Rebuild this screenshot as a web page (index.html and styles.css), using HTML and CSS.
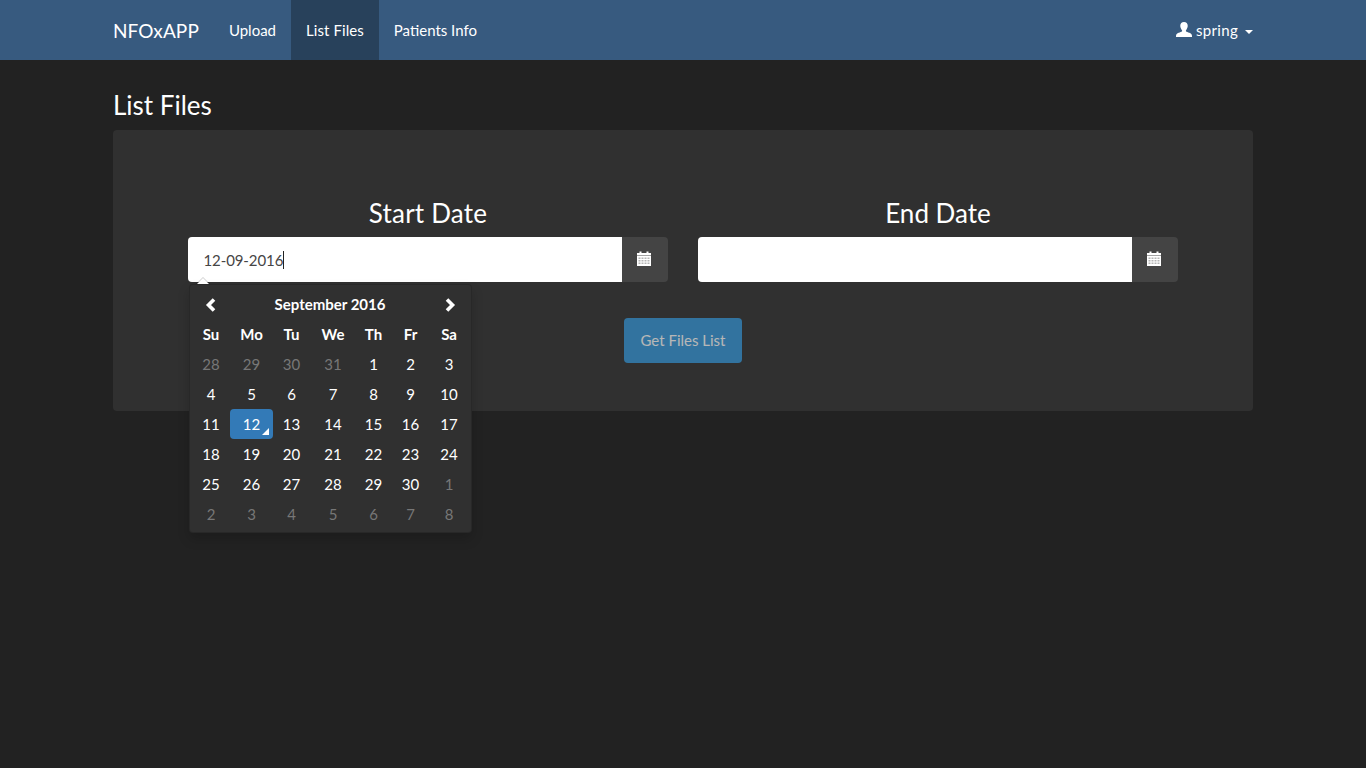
FILE: index.html
```html
<!DOCTYPE html>
<html lang="en">
<head>
<meta charset="utf-8">
<title>List Files</title>
<link rel="stylesheet" href="styles.css">
</head>
<body>
<nav class="navbar">
  <div class="container nav-inner">
    <a class="brand" href="#">NFOxAPP</a>
    <a class="nav-link" href="#">Upload</a>
    <a class="nav-link active" href="#">List Files</a>
    <a class="nav-link" href="#">Patients Info</a>
    <a class="user" href="#">
      <svg class="user-icon" viewBox="0 0 15 14" width="16" height="15"><path d="M7.5 0C5.3 0 4 1.6 4 3.6c0 1.6.7 3 1.6 4 .3.4.3 1-.1 1.3-.5.4-1.6.7-3 1.2C1 10.700 0 11.500 0 13v1h15v-1c0-1.500-1-2.300-2.500-2.900-1.400-.5-2.500-.8-3-1.200-.4-.3-.4-.9-.1-1.300.9-1 1.600-2.400 1.600-4C11 1.600 9.700 0 7.500 0z" fill="#fff"/></svg>
      <span class="user-name">spring</span>
      <span class="caret"></span>
    </a>
  </div>
</nav>
<main class="container">
  <h1 class="page-title">List Files</h1>
  <section class="well">
    <div class="date-columns">
      <div class="date-col">
        <h2 class="date-title start-title">Start Date</h2>
        <div class="input-group">
          <div class="input-wrap">
            <input class="date-input" type="text" value="12-09-2016" aria-label="Start Date">
            <span class="text-cursor"></span>
          </div>
          <span class="addon">
            <svg class="cal-icon" viewBox="0 0 14 15" width="14" height="15"><path d="M0 2h2.500V.5h2V2h5V.5h2V2H14v2.500H0z" fill="#fff"/><rect y="5" width="14" height="10" fill="#fff"/><path d="M1.500 6.500h2V8h-2zM4.500 6.500h2V8h-2zM7.500 6.500h2V8h-2zM10.500 6.500h2V8h-2zM1.500 9h2v1.500h-2zM4.500 9h2v1.500h-2zM7.500 9h2v1.500h-2zM10.500 9h2v1.500h-2zM1.500 11.500h2V13h-2zM4.500 11.500h2V13h-2zM7.500 11.500h2V13h-2zM10.500 11.500h2V13h-2z" fill="#b4b4b4"/></svg>
          </span>
        </div>
        <div class="datepicker">
          <div class="dp-grid">
            <span class="dp-nav"><svg viewBox="0 0 12 14" width="12" height="14"><path d="M9 1.500L3.500 7 9 12.500" fill="none" stroke="#fff" stroke-width="3.600"/></svg></span>
            <span class="dp-month">September 2016</span>
            <span class="dp-nav dp-next"><svg viewBox="0 0 12 14" width="12" height="14"><path d="M3 1.500L8.500 7 3 12.500" fill="none" stroke="#fff" stroke-width="3.600"/></svg></span>
            <span class="dp-dow">Su</span><span class="dp-dow">Mo</span><span class="dp-dow">Tu</span><span class="dp-dow">We</span><span class="dp-dow">Th</span><span class="dp-dow">Fr</span><span class="dp-dow">Sa</span>
            <span class="day old">28</span><span class="day old">29</span><span class="day old">30</span><span class="day old">31</span><span class="day">1</span><span class="day">2</span><span class="day">3</span>
            <span class="day">4</span><span class="day">5</span><span class="day">6</span><span class="day">7</span><span class="day">8</span><span class="day">9</span><span class="day">10</span>
            <span class="day">11</span><span class="day selected">12</span><span class="day">13</span><span class="day">14</span><span class="day">15</span><span class="day">16</span><span class="day">17</span>
            <span class="day">18</span><span class="day">19</span><span class="day">20</span><span class="day">21</span><span class="day">22</span><span class="day">23</span><span class="day">24</span>
            <span class="day">25</span><span class="day">26</span><span class="day">27</span><span class="day">28</span><span class="day">29</span><span class="day">30</span><span class="day old">1</span>
            <span class="day old">2</span><span class="day old">3</span><span class="day old">4</span><span class="day old">5</span><span class="day old">6</span><span class="day old">7</span><span class="day old">8</span>
          </div>
        </div>
      </div>
      <div class="date-col">
        <h2 class="date-title">End Date</h2>
        <div class="input-group">
          <div class="input-wrap">
            <input class="date-input" type="text" aria-label="End Date">
          </div>
          <span class="addon">
            <svg class="cal-icon" viewBox="0 0 14 15" width="14" height="15"><path d="M0 2h2.500V.5h2V2h5V.5h2V2H14v2.500H0z" fill="#fff"/><rect y="5" width="14" height="10" fill="#fff"/><path d="M1.500 6.500h2V8h-2zM4.500 6.500h2V8h-2zM7.500 6.500h2V8h-2zM10.500 6.500h2V8h-2zM1.500 9h2v1.500h-2zM4.500 9h2v1.500h-2zM7.500 9h2v1.500h-2zM10.500 9h2v1.500h-2zM1.500 11.500h2V13h-2zM4.500 11.500h2V13h-2zM7.500 11.500h2V13h-2zM10.500 11.500h2V13h-2z" fill="#b4b4b4"/></svg>
          </span>
        </div>
      </div>
    </div>
    <div class="actions">
      <button class="btn" type="button" disabled>Get Files List</button>
    </div>
  </section>
</main>
</body>
</html>
```

FILE: styles.css
```css
* {
  box-sizing: border-box;
}

html,
body {
  margin: 0;
  min-height: 100%;
}

body {
  min-height: 768px;
  background: #222;
  color: #fff;
  font-family: Lato, "Helvetica Neue", "Liberation Sans", sans-serif;
  font-size: 15px;
  line-height: 1.42857;
}

a {
  color: #fff;
  text-decoration: none;
}

.container {
  width: 1140px;
  margin: 0 auto;
}

.navbar {
  height: 60px;
  background: #375a7f;
}

.nav-inner {
  display: flex;
  align-items: stretch;
  height: 60px;
}

.brand {
  display: flex;
  align-items: center;
  padding-top: 1px;
  padding-right: 15px;
  font-size: 19px;
  letter-spacing: .1px;
}

.nav-link {
  display: flex;
  align-items: center;
  padding: 1px 15px 0;
}

.nav-link.active {
  background: #28415b;
  letter-spacing: .08px;
}

.user {
  display: flex;
  align-items: center;
  margin-left: auto;
  padding-top: 1px;
}

.user-name {
  letter-spacing: .3px;
}

.user-icon {
  margin-right: 4px;
  margin-top: -3px;
}

.caret {
  width: 0;
  height: 0;
  margin-left: 7px;
  margin-top: 2px;
  border-top: 4px solid #fff;
  border-left: 4px solid transparent;
  border-right: 4px solid transparent;
}

.page-title {
  margin: 0;
  padding-top: 30px;
  height: 70px;
  font-size: 26px;
  font-weight: 400;
  line-height: 30px;
}

.well {
  height: 281px;
  padding: 68px 75px 0;
  background: #303030;
  border-radius: 4px;
}

.date-columns {
  display: grid;
  grid-template-columns: 480px 480px;
  gap: 30px;
}

.date-col {
  position: relative;
}

.date-title {
  margin: 0 0 9px;
  font-size: 26px;
  font-weight: 400;
  line-height: 30px;
  text-align: center;
}

.start-title {
  letter-spacing: .2px;
}

.input-group {
  display: flex;
  height: 45px;
}

.input-wrap {
  position: relative;
  flex: 1;
}

.date-input {
  display: block;
  width: 100%;
  height: 45px;
  padding: 10px 15.5px;
  border: 0;
  border-radius: 4px 0 0 4px;
  outline: 0;
  background: #fff;
  color: #464545;
  font: inherit;
  letter-spacing: -.1px;
}

.text-cursor {
  position: absolute;
  left: 95px;
  top: 14px;
  width: 1px;
  height: 18px;
  background: #222;
}

.addon {
  display: flex;
  align-items: center;
  justify-content: center;
  width: 46px;
  background: #444;
  border-radius: 0 4px 4px 0;
}

.cal-icon {
  margin: 0 2px 2px 0;
}

.datepicker {
  position: absolute;
  left: 1px;
  top: 86px;
  z-index: 10;
  width: 283px;
  height: 249px;
  padding: 4px 3px 3px 2px;
  background: #303030;
  border: 1px solid rgba(0, 0, 0, .15);
  border-radius: 4px;
  box-shadow: 0 6px 12px rgba(0, 0, 0, .175);
}

.datepicker::before {
  content: "";
  position: absolute;
  left: 6px;
  top: -8px;
  border-left: 7px solid transparent;
  border-right: 7px solid transparent;
  border-bottom: 7px solid rgba(0, 0, 0, .2);
}

.datepicker::after {
  content: "";
  position: absolute;
  left: 7px;
  top: -7px;
  border-left: 6px solid transparent;
  border-right: 6px solid transparent;
  border-bottom: 6px solid #fff;
}

.dp-grid {
  display: grid;
  grid-template-columns: 38px 43px 37px 46px 35px 39px 38px;
  grid-auto-rows: 30px;
  font-size: 15px;
}

.dp-nav,
.dp-month,
.dp-dow,
.day {
  display: flex;
  align-items: center;
  justify-content: center;
  padding-top: 1px;
}

.dp-next {
  padding-left: 2px;
}

.dp-month {
  grid-column: span 5;
  font-weight: 700;
}

.dp-dow {
  font-weight: 700;
}

.day {
  position: relative;
}

.day.old {
  color: #777;
}

.day.selected {
  background: #337ab7;
  border-radius: 4px;
}

.day.selected::after {
  content: "";
  position: absolute;
  right: 4px;
  bottom: 4px;
  border-left: 7px solid transparent;
  border-bottom: 7px solid #fff;
}

.actions {
  display: flex;
  justify-content: center;
  margin-top: 36px;
}

.btn {
  width: 118px;
  height: 45px;
  padding: 0;
  border: 0;
  border-radius: 4px;
  background: #3498db;
  color: #fff;
  font: inherit;
  opacity: .65;
}
```
